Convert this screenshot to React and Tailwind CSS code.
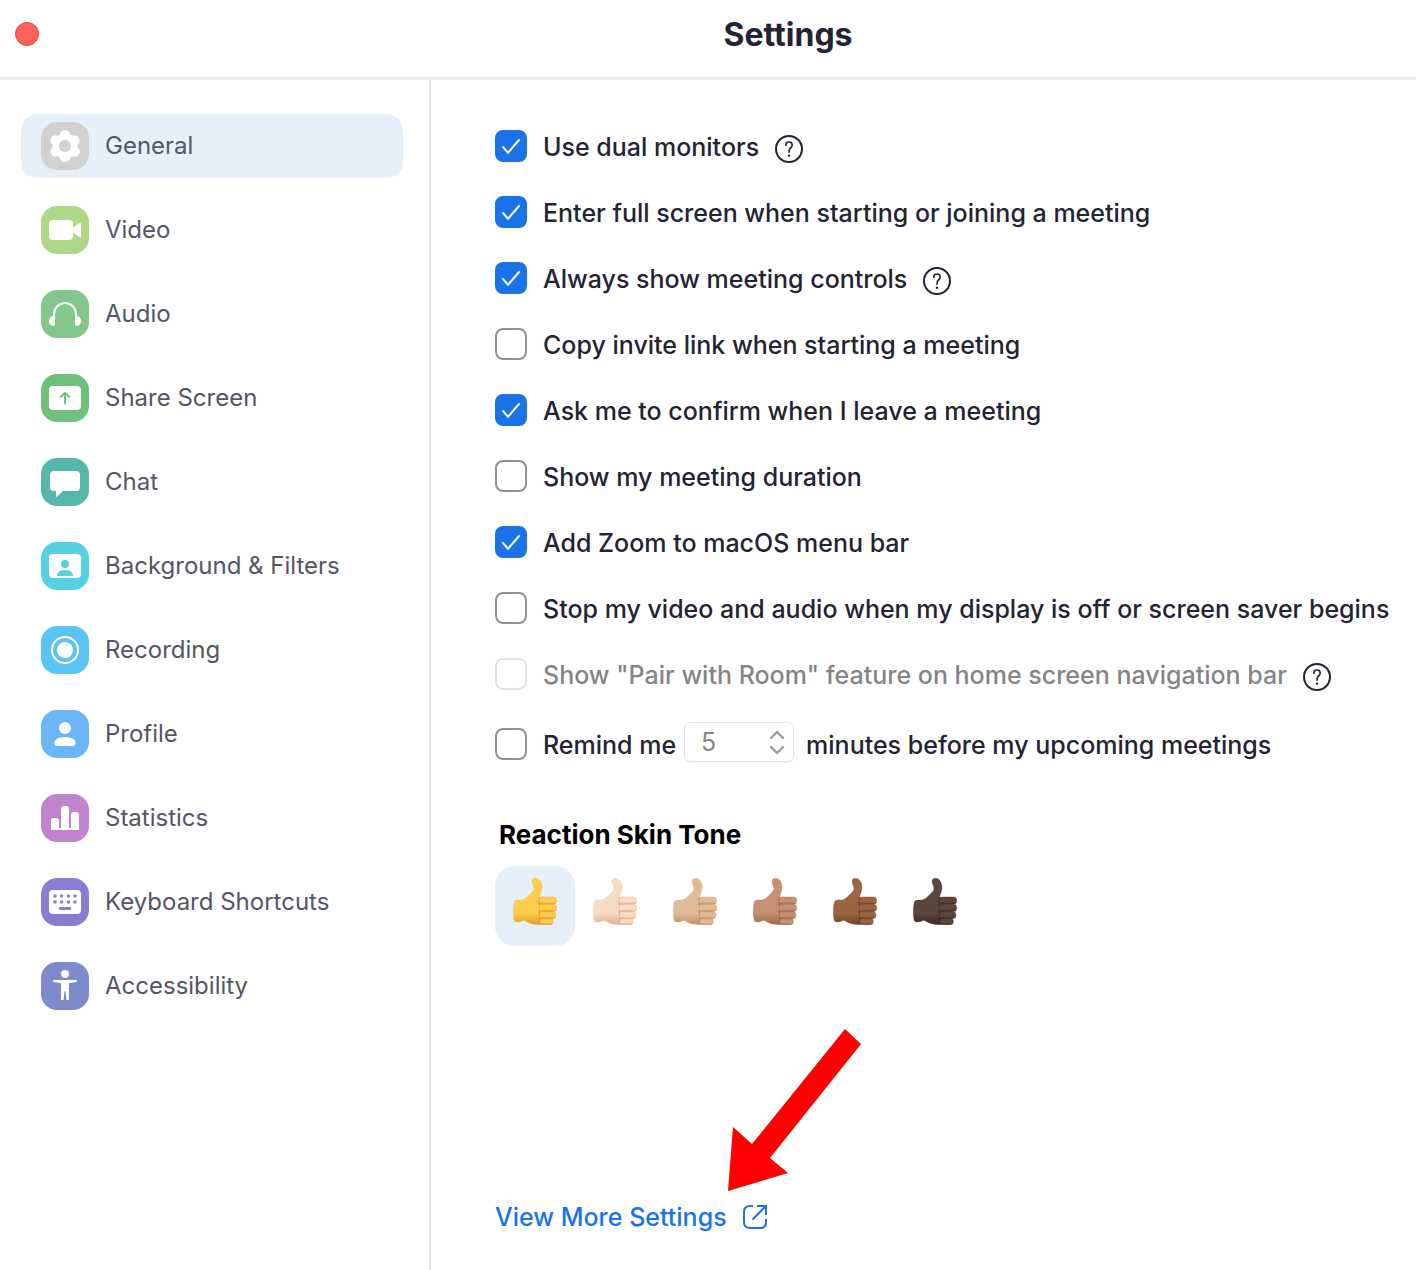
import { useState } from "react";

const DARK = "text-[#232333]";

function GearGlyph() {
  const lobes = [0, 60, 120, 180, 240, 300];
  return (
    <>
      <g fill="#fff">
        <circle cx="24" cy="24" r="11.5" />
        {lobes.map((a) => (
          <path key={a} d="M17.500 13.500Q19 13 19.300 11Q20.300 8 24 8T28.700 11Q29 13 30.500 13.500L24 24z" transform={`rotate(${a} 24 24)`} />
        ))}
      </g>
      <circle cx="24" cy="24" r="6" fill="#d1d1d1" />
    </>
  );
}

function VideoGlyph() {
  return (
    <g fill="#fff">
      <rect x="8" y="14" width="24" height="20" rx="4" />
      <path d="M32 21.500L38 17.300Q40 16.300 40 18V30Q40 31.700 38 30.700L32 26.500z" />
    </g>
  );
}

function AudioGlyph() {
  return (
    <>
      <path d="M13 28V24a11 11 0 0 1 22 0v4" fill="none" stroke="#fff" strokeWidth="2" />
      <path d="M14 26h-1.500a4.500 4.500 0 0 0-4.500 5a4.500 4.500 0 0 0 4.500 5q1.500 0 1.500-1.500zM34 26h1.500a4.500 4.500 0 0 1 4.500 5a4.500 4.500 0 0 1-4.500 5q-1.500 0-1.500-1.500z" fill="#fff" />
    </>
  );
}

function ShareGlyph() {
  return (
    <>
      <rect x="8" y="12" width="32" height="24" rx="4" fill="#fff" />
      <path d="M24 29.500V19M19.800 23L24 18.800L28.200 23" fill="none" stroke="#6fc07c" strokeWidth="2" strokeLinecap="round" strokeLinejoin="round" />
    </>
  );
}

function ChatGlyph() {
  return <path d="M13 13H35Q39 13 39 17V29Q39 33 35 33H22L16 38.800Q15 39.300 15 38V33H13Q9 33 9 29V17Q9 13 13 13z" fill="#fff" />;
}

function BackgroundGlyph() {
  return (
    <>
      <rect x="8" y="12" width="32" height="24" rx="4" fill="#fff" />
      <g fill="#56d1e2">
        <circle cx="24" cy="22" r="4" />
        <path d="M16 34Q16 28 24 28T32 34z" />
      </g>
    </>
  );
}

function RecordGlyph() {
  return (
    <>
      <circle cx="24" cy="24" r="13" fill="none" stroke="#fff" strokeWidth="2" />
      <circle cx="24" cy="24" r="8" fill="#fff" />
    </>
  );
}

function ProfileGlyph() {
  return (
    <g fill="#fff">
      <circle cx="24" cy="18" r="6" />
      <path d="M13.500 33Q13.500 27 24 27T34.500 33Q34.500 36 31.500 36H16.500Q13.500 36 13.500 33z" />
    </g>
  );
}

function StatisticsGlyph() {
  return (
    <path d="M10 36V27Q10 24 13 24H15Q18 24 18 27V34H20V15Q20 12 23 12H25Q28 12 28 15V34H30V21Q30 18 33 18H35Q38 18 38 21V36z" fill="#fff" />
  );
}

function KeyboardGlyph() {
  return (
    <>
      <rect x="8" y="12" width="32" height="24" rx="4" fill="#fff" />
      <g fill="#8a7dd1">
        {[14, 20.6, 27.4, 34].map((x) => (
          <g key={x}>
            <circle cx={x} cy="18" r="1.8" />
            <circle cx={x} cy="24" r="1.8" />
          </g>
        ))}
        <rect x="18" y="29" width="12" height="3" rx="1" />
      </g>
    </>
  );
}

function AccessGlyph() {
  return (
    <g fill="#fff">
      <circle cx="24" cy="12" r="4" />
      <path d="M12.500 18H35.500Q36.500 19 35.500 20L28 21.200V38H25.400L24.500 29H23.500L22.600 38H20V21.200L12.500 20Q11.500 19 12.500 18z" />
    </g>
  );
}

const NAV = [
  { name: "General", tile: "bg-[#d1d1d1]", Glyph: GearGlyph },
  { name: "Video", tile: "bg-[#afd788]", Glyph: VideoGlyph },
  { name: "Audio", tile: "bg-[#85c68a]", Glyph: AudioGlyph },
  { name: "Share Screen", tile: "bg-[#6fc07c]", Glyph: ShareGlyph },
  { name: "Chat", tile: "bg-[#54b6ad]", Glyph: ChatGlyph },
  { name: "Background & Filters", tile: "bg-[#56d1e2]", Glyph: BackgroundGlyph },
  { name: "Recording", tile: "bg-[#58c5f6]", Glyph: RecordGlyph },
  { name: "Profile", tile: "bg-[#6ab6f7]", Glyph: ProfileGlyph },
  { name: "Statistics", tile: "bg-[#c084ce]", Glyph: StatisticsGlyph },
  { name: "Keyboard Shortcuts", tile: "bg-[#8a7dd1]", Glyph: KeyboardGlyph },
  { name: "Accessibility", tile: "bg-[#7d8bcb]", Glyph: AccessGlyph },
];

const OPTIONS = [
  { id: "dual", label: "Use dual monitors", on: true, help: true },
  { id: "full", label: "Enter full screen when starting or joining a meeting", on: true },
  { id: "controls", label: "Always show meeting controls", on: true, help: true },
  { id: "invite", label: "Copy invite link when starting a meeting" },
  { id: "confirm", label: "Ask me to confirm when I leave a meeting", on: true },
  { id: "duration", label: "Show my meeting duration" },
  { id: "menubar", label: "Add Zoom to macOS menu bar", on: true },
  { id: "saver", label: "Stop my video and audio when my display is off or screen saver begins" },
  { id: "pair", label: 'Show "Pair with Room" feature on home screen navigation bar', disabled: true, help: true },
];

const TONES = [
  { name: "Default", fill: "#fdce4e", edge: "#e39a25" },
  { name: "Light", fill: "#f8dcc3", edge: "#e2ab8c" },
  { name: "Medium-light", fill: "#e0bc96", edge: "#c48d67" },
  { name: "Medium", fill: "#c59170", edge: "#9f674c" },
  { name: "Medium-dark", fill: "#9c6540", edge: "#704024" },
  { name: "Dark", fill: "#5b463c", edge: "#3a2823" },
];

function Checkbox({ id, on, disabled }) {
  return (
    <span className="grid shrink-0">
      <input
        id={id}
        type="checkbox"
        defaultChecked={on}
        disabled={disabled}
        className="peer [grid-area:1/1] size-8 appearance-none rounded-lg border-2 border-[#909096] bg-white checked:border-[#1a73e8] checked:bg-[#1a73e8] disabled:border-[#e1e0e9]"
      />
      <svg viewBox="0 0 32 32" className="pointer-events-none invisible [grid-area:1/1] size-8 peer-checked:visible" aria-hidden="true">
        <path d="M8 17L13 22.800L24 10" fill="none" stroke="#fff" strokeWidth="2" strokeLinecap="round" />
      </svg>
    </span>
  );
}

function Help() {
  return (
    <button type="button" aria-label="Help" className={`mt-[6px] ml-4 shrink-0 ${DARK}`}>
      <svg viewBox="0 0 28 28" className="size-7" fill="none" stroke="currentColor" strokeWidth="2" aria-hidden="true">
        <circle cx="14" cy="14" r="13" />
        <path d="M10.800 10.200Q10.800 7 14 7T17.200 10Q17.200 11.600 15.500 13Q14 14.300 14 17" strokeWidth="1.700" strokeLinecap="round" />
        <circle cx="14" cy="20.700" r="1.200" fill="currentColor" stroke="none" />
      </svg>
    </button>
  );
}

function Thumb({ fill, edge, id }) {
  return (
    <svg viewBox="0 0 144 168" className="h-14 w-12" aria-hidden="true">
      <defs>
        <linearGradient id={`palm${id}`} x1="0" y1="0" x2="0" y2="1">
          <stop offset="0.75" stopColor={fill} />
          <stop offset="1" stopColor={edge} />
        </linearGradient>
        <linearGradient id={`finger${id}`} x1="0" y1="0" x2="0" y2="1">
          <stop offset="0.65" stopColor={fill} />
          <stop offset="1" stopColor={edge} />
        </linearGradient>
      </defs>
      <path
        d="M64 6C65 1 72 0 77 1C86 3 92 14 93 25C94 36 89 47 86 56L100 70L98 133C96 140 91 140 84 140C72 140 59 138 48 132C41 127 36 126 31 130C25 133 15 133 11 130C5 119 6 80 11 70C14 64 26 67 35 65C47 62 55 50 64 42C72 34 68 27 66 21C64 15 62 11 64 6z"
        fill={`url(#palm${id})`}
        stroke={edge}
        strokeOpacity="0.35"
        strokeWidth="2"
      />
      <path d="M85 58C83 68 84 80 86 88C84 102 84 118 88 135" fill="none" stroke={edge} strokeWidth="4" />
      <g fill={`url(#finger${id})`} stroke={edge} strokeOpacity="0.5" strokeWidth="2">
        <rect x="87" y="121" width="40" height="19" rx="9" />
        <rect x="85" y="101" width="50" height="21" rx="10" />
        <rect x="84" y="79" width="53" height="22" rx="10" />
        <rect x="84" y="57" width="53" height="22" rx="10" />
      </g>
    </svg>
  );
}

function Chevron({ d }) {
  return (
    <svg viewBox="0 0 16 10" className="h-[10px] w-4" fill="none" stroke="#9b9b9b" strokeWidth="2.400" strokeLinecap="round" strokeLinejoin="round" aria-hidden="true">
      <path d={d} />
    </svg>
  );
}

export default function App() {
  const [section, setSection] = useState("General");
  const [tone, setTone] = useState("Default");
  const [minutes, setMinutes] = useState(5);

  return (
    <div className="flex min-h-screen flex-col bg-white font-['Inter',sans-serif] text-[25px] leading-8">
      <header className="flex h-20 items-center border-b-[3px] border-[#ebedf5] pb-[9px] pl-[15px]">
        <button type="button" aria-label="Close" className="size-6 shrink-0 rounded-full border border-[#e2463f] bg-[#fe605c]" />
        <h1 className={`ml-[121px] flex-1 pt-[2px] text-center text-[32px] font-bold ${DARK}`}>Settings</h1>
      </header>

      <div className="flex flex-1">
        <nav className="flex w-[431px] shrink-0 flex-col gap-5 border-r-2 border-[#e4e4e7] pt-[34px] pr-[26px] pl-[21px]">
          {NAV.map(({ name, tile, Glyph }) => (
            <button
              key={name}
              type="button"
              onClick={() => setSection(name)}
              className={`flex h-16 items-center gap-4 rounded-2xl px-5 text-left text-2xl text-[#555565] ${section === name ? "bg-[#e6f0fb]" : ""}`}
            >
              <span className={`size-12 shrink-0 overflow-hidden rounded-2xl ${tile}`}>
                <svg viewBox="0 0 48 48" className="size-12" aria-hidden="true">
                  <Glyph />
                </svg>
              </span>
              {name}
            </button>
          ))}
        </nav>

        <main className={`flex min-w-0 flex-1 flex-col items-start pt-[50px] pb-[37px] pl-16 font-medium whitespace-nowrap ${DARK}`}>
          <div className="flex flex-col gap-[34px]">
            {OPTIONS.map(({ id, label, on, disabled, help }) => (
              <div key={id} className="flex h-8 items-center">
                <Checkbox id={id} on={on} disabled={disabled} />
                <label htmlFor={id} className={`pt-[2px] pl-4 ${disabled ? "text-[#858585]" : ""}`}>
                  {label}
                </label>
                {help && <Help />}
              </div>
            ))}
            <div className="flex h-10 items-center">
              <Checkbox id="remind" />
              <label htmlFor="remind" className="pt-[2px] pl-4">Remind me</label>
              <div className="mr-3 mb-1 ml-2 flex h-10 w-[110px] items-center justify-between rounded-md border border-[#e4e4e4] pr-2 pl-4 shadow-xs">
                <input
                  type="text"
                  inputMode="numeric"
                  aria-label="Minutes before meeting"
                  value={minutes}
                  onChange={(e) => setMinutes(Number(e.target.value) || 0)}
                  className="w-10 font-normal text-[#858585] outline-none"
                />
                <div className="flex flex-col gap-[5px]">
                  <button type="button" aria-label="Increase" onClick={() => setMinutes(minutes + 1)} className="flex">
                    <Chevron d="M2 8L8 2L14 8" />
                  </button>
                  <button type="button" aria-label="Decrease" onClick={() => setMinutes(Math.max(0, minutes - 1))} className="flex">
                    <Chevron d="M2 2L8 8L14 2" />
                  </button>
                </div>
              </div>
              <span className="pt-[2px]">minutes before my upcoming meetings</span>
            </div>
          </div>

          <h2 className="mt-[55px] pl-1 text-[26px] font-bold text-black">Reaction Skin Tone</h2>
          <div className="mt-[15px] flex">
            {TONES.map(({ name, fill, edge }, i) => (
              <button
                key={name}
                type="button"
                aria-label={name}
                aria-pressed={tone === name}
                onClick={() => setTone(name)}
                className={`flex size-20 items-center justify-center rounded-[20px] ${tone === name ? "bg-[#e6f0fb]" : ""}`}
              >
                <Thumb fill={fill} edge={edge} id={i} />
              </button>
            ))}
          </div>

          <div className="relative mt-auto">
            <svg viewBox="0 0 134 162" className="absolute bottom-[42px] left-[232px] h-[162px] w-[134px]" aria-hidden="true">
              <path d="M118 0L134 15L43 129L61 144L1 162L6 98L25 115z" fill="#fe0000" />
            </svg>
            <a href="#more" className="flex items-center gap-4 text-[#1a73e8]">
              View More Settings
              <svg viewBox="0 0 24 24" className="size-6" fill="none" stroke="currentColor" strokeWidth="2" aria-hidden="true">
                <path d="M10 1H7Q1 1 1 7V17Q1 23 7 23H17Q23 23 23 17V14M14 1H23V10M23 1L9.500 14.500" />
              </svg>
            </a>
          </div>
        </main>
      </div>
    </div>
  );
}
